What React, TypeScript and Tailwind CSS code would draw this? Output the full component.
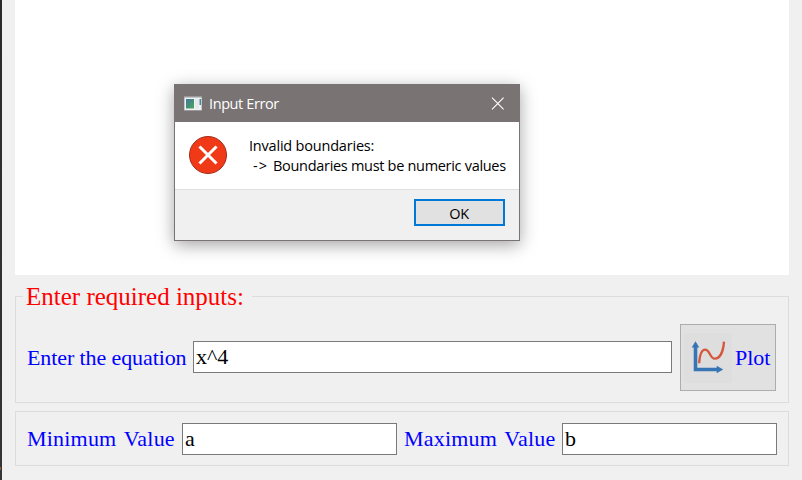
import type { ReactNode } from 'react';

function Field({ value, className }: { value: string; className: string }) {
  return (
    <div className={`h-8 shrink-0 border border-[#7a7a7a] bg-white pl-[2px] text-[22px] leading-[30px] text-black ${className}`}>
      {value}
    </div>
  );
}

function Label({ children, className }: { children: ReactNode; className: string }) {
  return <span className={`shrink-0 text-[22px] leading-8 whitespace-nowrap text-[#0000ff] ${className}`}>{children}</span>;
}

function PlotIcon() {
  return (
    <svg className="h-[50px] w-12 shrink-0 bg-[#dedede]" viewBox="0.3 0.8 48 50" fill="none">
      <path d="M11.8 14V37.3H34" stroke="#3775b5" strokeWidth="3.6" />
      <path d="M8 15.2L11.8 9L15.6 15.2ZM33 33.5L39.5 37.3L33 41.1Z" fill="#3775b5" />
      <path d="M15.5 31C16 23 18 17.5 21.5 17.5C26 17.5 26.5 26.5 31 26.5C36 26.5 39.5 20 40.3 9.5" stroke="#d4573b" strokeWidth="2.3" />
    </svg>
  );
}

function WindowIcon() {
  return (
    <svg className="h-[15px] w-[18px]" viewBox="0 0 18 15">
      <defs>
        <linearGradient id="screen" x1="0" y1="0" x2="1" y2="1">
          <stop offset="0" stopColor="#4772a0" />
          <stop offset=".55" stopColor="#459176" />
          <stop offset="1" stopColor="#4fa565" />
        </linearGradient>
      </defs>
      <path d="M0 0H18V15H0Z" fill="#99999b" />
      <path d="M.5 1.5H17.5V14H.5Z" fill="#f1f3f4" />
      <path d="M2 3H10V12.5H2Z" fill="url(#screen)" />
      <path d="M11 3H15V13H11Z" fill="#e7eaeb" />
      <path d="M15.5 3H17V9H15.5Z" fill="#4b86a4" />
    </svg>
  );
}

function ErrorDialog() {
  return (
    <div className="absolute top-[84px] left-[174px] flex h-[157px] w-[346px] flex-col border border-[#797373] bg-[#f0f0f0] font-['Open_Sans','Noto_Sans',sans-serif] text-[14.5px] tracking-[-0.3px] text-black shadow-[0_4px_16px_0_rgba(0,0,0,0.36)]">
      <div className="flex h-[37px] shrink-0 items-center bg-[#797373] pr-[15px] pl-[9px] text-white">
        <WindowIcon />
        <span className="ml-[7px] tracking-[-0.4px]">Input Error</span>
        <svg className="ml-auto h-[13px] w-[13px]" viewBox="0 0 13 13" fill="none">
          <path d="M1 .7L12.6 12.3M12.6.7L1 12.3" stroke="#fff" strokeWidth="1.1" />
        </svg>
      </div>
      <div className="flex h-[68px] shrink-0 border-b border-[#dfdfdf] bg-white pt-[14px] pl-[14px]">
        <svg className="h-[38px] w-[38px]" viewBox="0 0 38 38" fill="none">
          <circle cx="19" cy="19" r="18.5" fill="#f03a17" stroke="#a42a1b" />
          <path d="M10.5 10.5L27.5 27.5M27.5 10.5L10.5 27.5" stroke="#fff" strokeWidth="3" />
        </svg>
        <div className="ml-[22px] leading-5">
          <div className="tracking-[-0.2px]">Invalid boundaries:</div>
          <div className="flex pl-1">
            <span className="w-5 tracking-[1px]">-&gt;</span>
            <span>Boundaries must be numeric values</span>
          </div>
        </div>
      </div>
      <div className="flex justify-end pt-[9px] pr-[14px]">
        <button className="h-[27px] w-[91px] border-2 border-[#0078d7] bg-[#e1e1e1] pt-px pr-px leading-[24px]">OK</button>
      </div>
    </div>
  );
}

export default function App() {
  return (
    <div className="relative flex h-[480px] w-[802px] overflow-hidden bg-[#f0f0f0] font-['Liberation_Serif',serif]">
      <div className="flex w-[2px] shrink-0 flex-col bg-linear-to-b from-[#29292b] to-[#33373a]">
        <div className="mt-[467px] h-[3px] w-px bg-[#9a5a2c]" />
      </div>
      <div className="ml-[13px] flex w-[774px] flex-col">
        <div className="h-[275px] bg-white" />
        <div className="mt-[21px] h-[107px] border border-[#dcdcdc]">
          <div className="-mt-4 ml-[7px] h-8 w-[229px] bg-[#f0f0f0] pl-[3px] text-[25px] leading-8 whitespace-nowrap text-[#ff0000]">
            Enter required inputs:
          </div>
          <div className="mt-[11px] flex h-[67px] items-start pl-[11px]">
            <Label className="mt-[18px] w-[166px] tracking-[-0.1px]">Enter the equation</Label>
            <Field value="x^4" className="mt-[17px] w-[479px]" />
            <button className="ml-2 flex h-[67px] w-24 shrink-0 items-center border border-[#adadad] bg-[#e1e1e1] pl-[3px]">
              <PlotIcon />
              <Label className="ml-[3px]">Plot</Label>
            </button>
          </div>
        </div>
        <div className="mt-2 flex h-[55px] items-center border border-[#dcdcdc] pl-[11px]">
          <Label className="w-[155px] tracking-[0.2px] [word-spacing:2px]">Minimum Value</Label>
          <Field value="a" className="w-[215px]" />
          <Label className="ml-[7px] w-[158px] tracking-[0.2px] [word-spacing:2px]">Maximum Value</Label>
          <Field value="b" className="w-[215px]" />
        </div>
      </div>
      <ErrorDialog />
    </div>
  );
}
